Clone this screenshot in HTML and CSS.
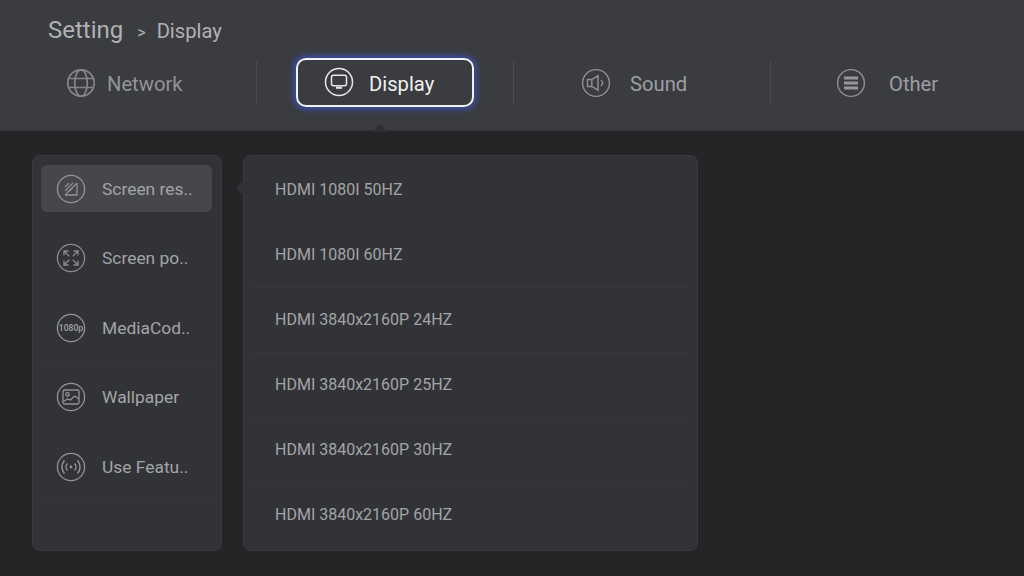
FILE: index.html
```html
<!DOCTYPE html>
<html lang="en">
<head>
<meta charset="utf-8">
<title>Setting - Display</title>
<link rel="stylesheet" href="styles.css">
</head>
<body>
<header class="top">
  <div class="crumbs"><span class="crumb-root">Setting</span><span class="crumb-sep">&gt;</span><span class="crumb-leaf">Display</span></div>
  <nav class="tabs">
    <div class="tab tab-network">
      <svg class="tab-icon" viewBox="0 0 30 30"><g fill="none" stroke="#85868a" stroke-width="1.7"><circle cx="15" cy="15" r="13.2"/><ellipse cx="15" cy="15" rx="6.3" ry="13.2"/><path d="M3.2 10.5h23.6M3.2 19.5h23.6"/></g></svg>
      <span class="tab-label">Network</span>
    </div>
    <div class="tab tab-display">
      <div class="focus">
        <svg class="tab-icon" viewBox="0 0 30 30"><g fill="none" stroke="#e8e8ea" stroke-width="1.5"><circle cx="15" cy="15" r="13.5"/><rect x="7.500" y="8.200" width="15" height="10.500" rx="2"/></g><path d="M12 20.800h6" stroke="#e8e8ea" stroke-width="2"/></svg>
        <span class="tab-label">Display</span>
      </div>
      <i class="tab-arrow"></i>
    </div>
    <div class="tab tab-sound">
      <svg class="tab-icon" viewBox="0 0 30 30"><g fill="none" stroke="#8f9094" stroke-width="1.4"><circle cx="15" cy="15" r="13.4"/><path d="M6.5 11.5h4.3L17 7.8v14.4l-6.2-3.7H6.5zM10.8 11.5v7M20 12l1.9 3-1.9 3"/></g></svg>
      <span class="tab-label">Sound</span>
    </div>
    <div class="tab tab-other">
      <svg class="tab-icon" viewBox="0 0 30 30"><circle cx="15" cy="15" r="13.4" fill="none" stroke="#8f9094" stroke-width="1.4"/><path d="M8 10h14M8 15h14M8 20h14" stroke="#96979b" stroke-width="3"/></svg>
      <span class="tab-label">Other</span>
    </div>
  </nav>
</header>
<main class="content">
  <aside class="panel side">
    <div class="side-row side-row-active">
      <svg class="side-icon" viewBox="0 0 30 30"><g fill="none" stroke="#929397" stroke-width="1.3"><circle cx="15" cy="15" r="13.6"/><path d="M9 21h12V9"/><path d="M9 13l4-4M9 17l8-8M9 21l12-12M13 17.500l4-4" stroke-width="1.100"/></g></svg>
      <span>Screen res..</span>
    </div>
    <div class="side-row">
      <svg class="side-icon" viewBox="0 0 30 30"><g fill="none" stroke="#8a8b8f" stroke-width="1.300"><circle cx="15" cy="15" r="13.600"/><path d="M8 8l5.200 5.200M22 8l-5.200 5.200M8 22l5.200-5.200M22 22l-5.200-5.200M8 12.500V8h4.500M17.500 8H22v4.500M8 17.500V22h4.500M22 17.500V22h-4.500"/></g></svg>
      <span>Screen po..</span>
    </div>
    <div class="side-row side-row-ruled">
      <svg class="side-icon" viewBox="0 0 30 30"><circle cx="15" cy="15" r="13.600" fill="none" stroke="#929397" stroke-width="1.300"/><text class="icon-label" x="15" y="18" text-anchor="middle">1080p</text></svg>
      <span>MediaCod..</span>
    </div>
    <div class="side-row">
      <svg class="side-icon" viewBox="0 0 30 30"><g fill="none" stroke="#929397" stroke-width="1.300"><circle cx="15" cy="15" r="13.600"/><rect x="7" y="8" width="16" height="14" rx="1.500"/><circle cx="11.500" cy="12.300" r="1.700"/><path d="M7.500 19.500l4-2.500 3 1 4-4 4.500 3"/></g></svg>
      <span>Wallpaper</span>
    </div>
    <div class="side-row side-row-ruled">
      <svg class="side-icon" viewBox="0 0 30 30"><g fill="none" stroke="#929397" stroke-width="1.500"><circle cx="15" cy="15" r="13.600" stroke-width="1.300"/><path d="M11.500 11.500a5 5 0 0 0 0 7M18.500 11.500a5 5 0 0 1 0 7M8.500 8.500a9.500 9.500 0 0 0 0 13M21.500 8.500a9.500 9.500 0 0 1 0 13"/></g><circle cx="15" cy="15" r="1.400" fill="#929397"/></svg>
      <span>Use Featu..</span>
    </div>
  </aside>
  <section class="panel list">
    <i class="list-arrow"></i>
    <div class="list-row list-row-plain">HDMI 1080I 50HZ</div>
    <div class="list-row">HDMI 1080I 60HZ</div>
    <div class="list-row">HDMI 3840x2160P 24HZ</div>
    <div class="list-row">HDMI 3840x2160P 25HZ</div>
    <div class="list-row">HDMI 3840x2160P 30HZ</div>
    <div class="list-row list-row-plain">HDMI 3840x2160P 60HZ</div>
  </section>
</main>
</body>
</html>
```
FILE: styles.css
```css
* { box-sizing: border-box; }
html, body { margin: 0; height: 100%; }
body {
  width: 1024px;
  height: 576px;
  overflow: hidden;
  background: #252527;
  font-family: Roboto, "Liberation Sans", sans-serif;
  color: #a9aaad;
}
.top {
  height: 131px;
  background: #3b3c40;
  border-bottom: 1px solid #333438;
  padding-top: 14px;
}
.crumbs {
  display: flex;
  align-items: baseline;
  height: 36px;
  padding-left: 48px;
  color: #b0b1b4;
}
.crumb-root { font-size: 24px; line-height: 32px; }
.crumb-sep { font-size: 16px; margin: 0 11px 0 14px; }
.crumb-leaf { font-size: 20.200px; }
.tabs {
  display: grid;
  grid-template-columns: 257px 257px 257px 253px;
  height: 50px;
  margin-top: 8px;
  font-size: 20.200px;
  color: #9d9ea1;
}
.tab {
  position: relative;
  display: flex;
  align-items: center;
  height: 50px;
}
.tab + .tab::before {
  content: "";
  position: absolute;
  left: -1px;
  top: 3px;
  width: 1px;
  height: 44px;
  background: #4c4d51;
}
.tab-icon { width: 30px; height: 30px; flex: none; margin-top: -1px; }
.tab-label { padding-top: 2px; }
.tab-network { padding-left: 66px; gap: 11px; color: #929397; }
.tab-display { padding-left: 39px; }
.tab-sound { padding-left: 67px; gap: 19px; }
.tab-other { padding-left: 65px; gap: 23px; }
.focus {
  display: flex;
  align-items: center;
  gap: 15px;
  width: 178px;
  height: 49px;
  margin-bottom: 1px;
  padding-left: 26px;
  border: 2px solid #f2f3f7;
  border-radius: 10px;
  box-shadow: 0 0 6px 2px #3d50b4;
  color: #f0f0f2;
}
.tab-arrow {
  position: absolute;
  left: 115px;
  top: 66px;
  width: 0;
  height: 0;
  border-left: 8px solid transparent;
  border-right: 8px solid transparent;
  border-bottom: 8px solid #2e2f32;
}
.content {
  display: flex;
  gap: 21px;
  padding: 24px 0 0 32px;
}
.panel {
  height: 396px;
  background: #323337;
  border: 1px solid #3b3c40;
  border-radius: 8px;
}
.side {
  width: 190px;
  padding: 9px 9px 0 8px;
  font-size: 17.400px;
  color: #a3a4a7;
}
.side-row {
  display: flex;
  align-items: center;
  gap: 16px;
  height: 47px;
  margin-bottom: 22.500px;
  padding-left: 15px;
  border-radius: 6px;
  position: relative;
}
.side-row-active { background: #46474c; }
.side-row-ruled::after {
  content: "";
  position: absolute;
  left: -8px;
  right: -8px;
  bottom: -12px;
  height: 1px;
  background: #36373b;
}
.side-icon { width: 30px; height: 30px; flex: none; }
.icon-label {
  font-family: Roboto, "Liberation Sans", sans-serif;
  font-size: 8.600px;
  font-weight: 500;
  fill: #a3a4a7;
}
.list {
  position: relative;
  width: 455px;
  padding: 2px 10px 0;
}
.list-arrow {
  position: absolute;
  left: -8px;
  top: 24px;
  width: 0;
  height: 0;
  border-top: 8px solid transparent;
  border-bottom: 8px solid transparent;
  border-right: 8px solid #323337;
}
.list-row {
  display: flex;
  align-items: center;
  height: 65px;
  padding: 0 0 2px 21px;
  font-size: 16px;
  color: #a3a4a7;
  border-bottom: 1px solid #37383c;
}
.list-row-plain { border-bottom-color: transparent; }
```
